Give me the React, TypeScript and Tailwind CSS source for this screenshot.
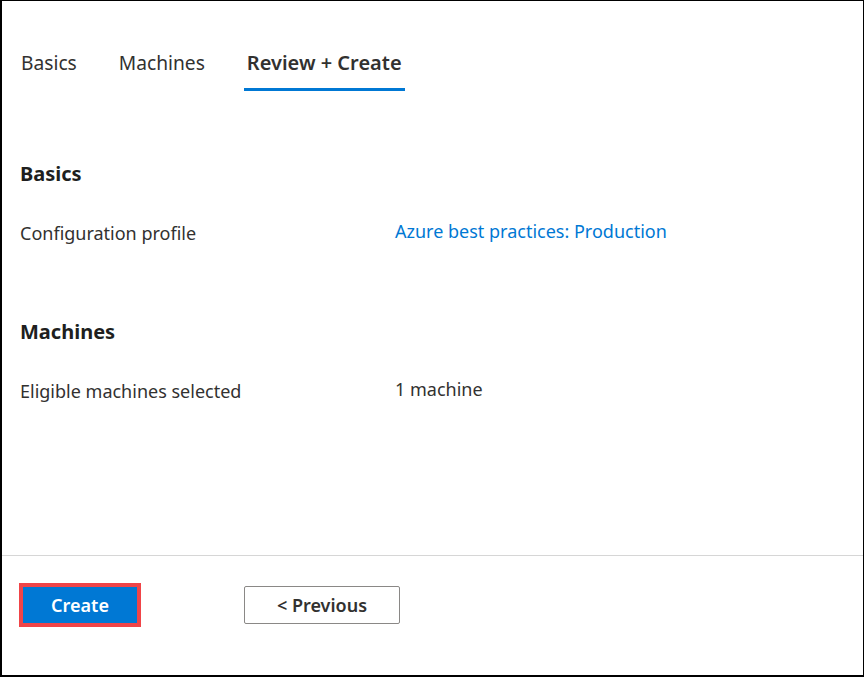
import React from "react";

const font = { fontFamily: '"Noto Sans", "Open Sans", sans-serif' };

export default function App() {
  return (
    <div
      className="w-[864px] h-[677px] bg-white border-black border-l-2 border-t border-r border-b-2 flex flex-col text-[#323130]"
      style={font}
    >
      {/* Tabs */}
      <div className="flex gap-[36px] pl-[16px] mt-[48px]">
        <div className="px-[3px] text-[19.2px] leading-[28px] pb-[11px] border-b-[3px] border-transparent text-[#323130]">
          Basics
        </div>
        <div className="px-[3px] text-[19.2px] leading-[28px] pb-[11px] border-b-[3px] border-transparent text-[#323130]">
          Machines
        </div>
        <div className="px-[3px] text-[20px] leading-[28px] pb-[11px] border-b-[3px] border-[#0078d4] font-semibold text-[#323130]">
          Review + Create
        </div>
      </div>

      {/* Content */}
      <div className="flex-1 pl-[18px]">
        <div className="mt-[69px] text-[20px] leading-[28px] font-bold text-[#201f1e]">Basics</div>
        <div className="mt-[33px] flex text-[18px] leading-[24px]">
          <div className="w-[375px]">Configuration profile</div>
          <div className="text-[#0078d4] -mt-[2px]">Azure best practices: Production</div>
        </div>

        <div className="mt-[73px] text-[20px] leading-[28px] font-bold text-[#201f1e]">Machines</div>
        <div className="mt-[33px] flex text-[18px] leading-[24px]">
          <div className="w-[375px]">Eligible machines selected</div>
          <div className="-mt-[2px]">1 machine</div>
        </div>
      </div>

      {/* Footer */}
      <div className="border-t border-[#d6d6d6] h-[120px] flex items-start pl-[21px] pt-[30px] gap-[107px]">
        <div className="h-[38px] flex items-center">
          <button className="w-[114px] h-[36px] bg-[#0078d4] text-white text-[18px] font-semibold outline-[4px] outline-solid outline-[#f04448] flex items-center justify-center">
            Create
          </button>
        </div>
        <button className="w-[156px] h-[38px] border border-[#8a8886] rounded-[2px] bg-white text-[18px] font-semibold text-[#323130] flex items-center justify-center">
          &lt; Previous
        </button>
      </div>
    </div>
  );
}
